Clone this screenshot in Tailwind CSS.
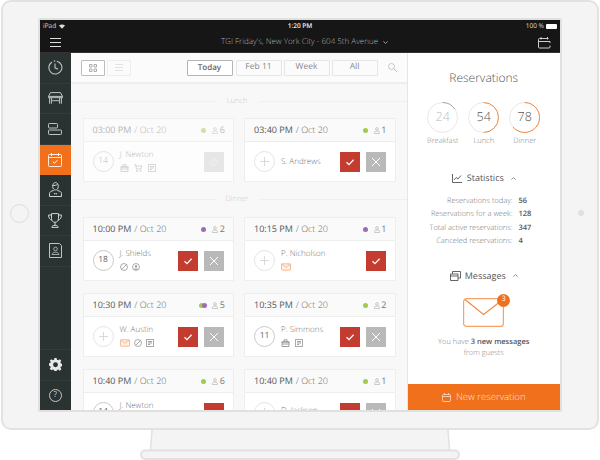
<!DOCTYPE html>
<html>
<head>
  <meta charset="UTF-8">
  <script src="https://cdn.jsdelivr.net/npm/@tailwindcss/browser@4"></script>
  <title>Reservations</title>
</head>
<body class="bg-white w-[600px] h-[460px] overflow-hidden font-['Open_Sans',sans-serif] [text-rendering:geometricPrecision]">

<!-- icons -->
<svg class="hidden">
  <symbol id="i-user" viewBox="0 0 7 8"><circle cx="3.5" cy="2.2" r="1.6" fill="none" stroke="currentColor" stroke-width=".7"/><path d="M.6 7.5V6.4c0-1 .8-1.7 1.7-1.7h2.4c.9 0 1.7.7 1.7 1.700v1.100z" fill="none" stroke="currentColor" stroke-width=".7"/></symbol>
  <symbol id="i-check" viewBox="0 0 20 20"><path d="M6.500 10.200l2.500 2.400 4.600-4.800" fill="none" stroke="#fff" stroke-width="1.300"/></symbol>
  <symbol id="i-x" viewBox="0 0 20 20"><path d="M6 6l8 8M14 6l-8 8" fill="none" stroke="#fff" stroke-width="1"/></symbol>
  <symbol id="i-plus" viewBox="0 0 21 21"><path d="M10.500 5.500v10M5.500 10.500h10" fill="none" stroke="currentColor" stroke-width=".8"/></symbol>
  <symbol id="i-gift" viewBox="0 0 9 8"><path d="M1 3h7v4.500H1zM.5 3h8M3 3V.8M6 3V.8M3 .8h3M1 5h7" fill="none" stroke="currentColor" stroke-width=".8"/></symbol>
  <symbol id="i-cart" viewBox="0 0 9 8"><path d="M.2.800h1.400l.9 4.200h4.500l1-3H1.900M3 7.600a.6.600 0 100-1.200.6.600 0 000 1.200zM6.500 7.600a.6.600 0 100-1.200.6.600 0 000 1.200z" fill="none" stroke="currentColor" stroke-width=".8"/></symbol>
  <symbol id="i-note" viewBox="0 0 8 8"><path d="M.4.400h7.200v7.200H.4zM2 2.500h4M2 4h4M2 5.500h2.200" fill="none" stroke="currentColor" stroke-width=".8"/></symbol>
  <symbol id="i-ban" viewBox="0 0 9 9"><circle cx="4.500" cy="4.500" r="3.900" fill="none" stroke="currentColor" stroke-width=".8"/><path d="M1.800 7.200l5.400-5.400" stroke="currentColor" stroke-width=".8"/></symbol>
  <symbol id="i-guest" viewBox="0 0 9 9"><circle cx="4.500" cy="4.500" r="3.900" fill="none" stroke="currentColor" stroke-width=".8"/><circle cx="4.500" cy="3.800" r="1.200" fill="currentColor"/><path d="M2.200 7.200c.3-1.200 4.300-1.200 4.600 0" fill="currentColor"/></symbol>
  <symbol id="i-mail" viewBox="0 0 11 8"><rect x=".5" y=".5" width="10" height="7" rx=".8" fill="#fdf0e6" stroke="#f7a46c" stroke-width=".8"/><path d="M.8.800l4.700 3.600L10.200.800" fill="none" stroke="#f7a46c" stroke-width=".8"/></symbol>
</svg>

<!-- tablet -->
<div class="ml-px w-[598px] h-[430px] border-2 border-[#e2e2e2] rounded-[10px] bg-[#f4f4f4] flex pt-4">
  <div class="w-[35px] h-[390px] flex items-center justify-center pr-[2px]">
    <div class="w-[19px] h-[19px] rounded-full border border-[#dedede]"></div>
  </div>

  <!-- screen -->
  <div class="w-[524px] h-[394px] border-2 border-[#e0e0e0] rounded-[2px] flex flex-col overflow-hidden bg-white">
    <div class="h-[32px] shrink-0 bg-[#161616] text-white">
      <div class="h-[12px] grid grid-cols-3 items-center px-[3px] text-[6.500px] font-semibold leading-none">
        <div class="flex items-center gap-[3px] font-normal text-[#ddd]">iPad
          <svg class="w-[6px] h-[5px]" viewBox="0 0 6 5"><path d="M3 4.800L0 1.600C1.700.1 4.300.1 6 1.600z" fill="#ddd"/></svg>
        </div>
        <div class="text-center text-[#eee]">1:20 PM</div>
        <div class="flex items-center justify-end gap-px font-normal text-[#ddd]">100 %
          <div class="w-[11px] h-[5px] bg-white rounded-[1px] ml-px"></div>
        </div>
      </div>
      <div class="h-[20px] flex items-center pl-[10px] pr-[9px]">
        <svg class="w-[11px] h-[9px] shrink-0" viewBox="0 0 11 9"><path d="M0 .5h11M0 4.500h11M0 8.500h11" stroke="#ddd" stroke-width="1"/></svg>
        <div class="flex-1 flex items-center justify-center gap-[5px] text-[8px] font-light text-[#aaa] pl-[10px]">TGI Friday's, New York City - 604 5th Avenue
          <svg class="w-[5px] h-[3px]" viewBox="0 0 5 3"><path d="M.4.400l2.100 2 2.100-2" fill="none" stroke="#bbb" stroke-width=".8"/></svg>
        </div>
        <svg class="w-[13px] h-[13px] shrink-0" viewBox="0 0 13 13"><path d="M10.500 2.500h-9a1 1 0 00-1 1v7.500a1 1 0 001 1h9.500a1 1 0 001-1v-1.500M.5 5.500h11.500v1.500M3 1v2.500M9.500 1v2.500" fill="none" stroke="#ccc" stroke-width="1"/></svg>
      </div>
    </div>

    <div class="flex-1 flex min-h-0 border-t border-[#333]">
      <!-- sidebar -->
      <div class="w-[30.500px] shrink-0 bg-[#2b3332] flex flex-col">
        <div class="h-[30.500px] border-b border-[#333c3b] flex items-center justify-center">
          <svg class="w-[15px] h-[15px]" viewBox="0 0 15 15"><path d="M8.800 1.200A6.500 6.500 0 1 1 4 2" fill="none" stroke="#bfc3c2" stroke-width="1.100"/><path d="M7 3.500v4.300l3 1.500" fill="none" stroke="#bfc3c2" stroke-width="1.100"/><circle cx="6.500" cy="1" r=".8" fill="#bfc3c2"/></svg>
        </div>
        <div class="h-[30.500px] border-b border-[#333c3b] flex items-center justify-center">
          <svg class="w-[15px] h-[12px]" viewBox="0 0 15 12"><path d="M2.500.6h10L14.500 4.400H.5zM.5 4.400v1.300h14V4.400M1.600 5.700v6M13.400 5.700v6M3.400 5.700v3h8.200v-3M3.400 8.700v3M11.600 8.700v3" fill="none" stroke="#bfc3c2" stroke-width="1"/></svg>
        </div>
        <div class="h-[30.500px] border-b border-[#333c3b] flex items-center justify-center">
          <svg class="w-[14px] h-[12px]" viewBox="0 0 14 12"><rect x=".5" y=".5" width="9" height="4.500" rx=".8" fill="none" stroke="#bfc3c2"/><rect x=".5" y="7" width="13" height="4.500" rx=".8" fill="none" stroke="#bfc3c2"/></svg>
        </div>
        <div class="h-[30.500px] bg-[#f1701c] flex items-center justify-center">
          <svg class="w-[14px] h-[14px]" viewBox="0 0 14 14"><rect x=".5" y="1.500" width="13" height="12" rx="1" fill="none" stroke="#fff" stroke-opacity=".85"/><path d="M.5 4.500h13M3.500 0v3M10.500 0v3" fill="none" stroke="#fff" stroke-opacity=".85"/><path d="M4.800 8.700l1.700 1.600 2.800-3" fill="none" stroke="#fff"/></svg>
        </div>
        <div class="h-[30.500px] border-b border-[#333c3b] flex items-center justify-center">
          <svg class="w-[13px] h-[15px]" viewBox="0 0 13 15"><path d="M3.700 4.300c0-5 5.600-5 5.600 0 0 2.200-1.200 3.700-2.800 3.700S3.700 6.500 3.700 4.300zM3.600 3.600c1.800 0 4-.4 5-1.600M4.700 8.500C2 9 .5 10 .5 11.500v3h12v-3c0-1.500-1.500-2.500-4.200-3" fill="none" stroke="#d0d3d2" stroke-width="1"/><path d="M5 11l1.500.6L8 11v1.500l-1.500-.6-1.500.6z" fill="#d0d3d2"/></svg>
        </div>
        <div class="h-[30.500px] border-b border-[#333c3b] flex items-center justify-center">
          <svg class="w-[14px] h-[15px]" viewBox="0 0 14 15"><path d="M3.500.6h7v5c0 2.200-1.500 3.700-3.500 3.700S3.500 7.800 3.500 5.600zM3.500 2H.6c0 3 1.200 4.700 3.400 5M10.500 2h2.900c0 3-1.200 4.700-3.400 5M7 9.300v2.700M3.800 14.400c0-2.800 6.400-2.800 6.400 0z" fill="none" stroke="#d0d3d2" stroke-width="1"/></svg>
        </div>
        <div class="h-[30.500px] border-b border-[#333c3b] flex items-center justify-center">
          <svg class="w-[13px] h-[15px]" viewBox="0 0 13 15"><path d="M.5.500h10l2 2v12H.5z" fill="none" stroke="#bfc3c2"/><circle cx="6.500" cy="6" r="1.800" fill="none" stroke="#bfc3c2" stroke-width=".8"/><path d="M3 11.500c0-3 7-3 7 0z" fill="none" stroke="#bfc3c2" stroke-width=".8"/></svg>
        </div>
        <div class="flex-1"></div>
        <div class="h-[30.500px] border-t border-[#333c3b] flex items-center justify-center">
          <svg class="w-[13px] h-[13px]" viewBox="0 0 24 24"><path fill-rule="evenodd" d="M10 0h4l.7 3.200 2.300 1 2.800-1.800 2.800 2.800L21 8l1 2.300 3 .7v4l-3 .7-1 2.300 1.800 2.800-2.800 2.800L17 21l-2.300 1-.7 3h-4l-.7-3-2.300-1-2.800 1.800L1.400 20 3.200 17l-1-2.300-3-.7v-4l3-.7 1-2.300L1.400 5.200l2.800-2.800L7 4.200l2.300-1zM12 8a4.500 4.500 0 100 9 4.500 4.500 0 000-9z" fill="#e8e8e8"/></svg>
        </div>
        <div class="h-[30.500px] border-t border-[#333c3b] flex items-center justify-center">
          <div class="w-[13px] h-[13px] rounded-full border border-[#c4c7c6] flex items-center justify-center text-[8px] leading-none text-[#d0d3d2]">?</div>
        </div>
      </div>

      <!-- reservations list -->
      <div class="w-[337px] shrink-0 bg-[#f8f8f8] border-r border-[#e6e6e6] flex flex-col overflow-hidden">
        <div class="h-[31px] shrink-0 bg-[#fbfbfb] border-b-2 border-[#eeeeee] flex items-center pl-[10px] pr-[10px] text-[8.500px] text-[#888]">
          <div class="w-[24px] h-[16px] border border-[#bdbdbd] rounded-[1px] flex items-center justify-center bg-white">
            <svg class="w-[8px] h-[8px]" viewBox="0 0 8 8"><path d="M.5.500h2.500v2.500H.5zM5 .500h2.500v2.500H5zM.5 5h2.500v2.500H.5zM5 5h2.500v2.500H5z" fill="none" stroke="#999" stroke-width=".8"/></svg>
          </div>
          <div class="w-[24px] h-[16px] ml-[2px] border border-[#eeeeee] rounded-[1px] flex items-center justify-center">
            <svg class="w-[8px] h-[7px]" viewBox="0 0 8 7"><path d="M0 .5h8M0 3.500h8M0 6.500h8" stroke="#ddd" stroke-width=".8"/></svg>
          </div>
          <div class="ml-auto w-[46px] h-[16px] border border-[#b5b5b5] rounded-[1px] bg-white flex items-center justify-center text-[8px] font-semibold text-[#666]">Today</div>
          <div class="ml-[3px] w-[46px] h-[16px] border border-[#e6e6e6] rounded-[1px] flex items-center justify-center">Feb 11</div>
          <div class="ml-[2px] w-[46px] h-[16px] border border-[#e6e6e6] rounded-[1px] flex items-center justify-center">Week</div>
          <div class="ml-[2px] w-[46px] h-[16px] border border-[#e6e6e6] rounded-[1px] flex items-center justify-center">All</div>
          <svg class="ml-[10px] w-[9px] h-[9px]" viewBox="0 0 9 9"><circle cx="3.500" cy="3.500" r="3" fill="none" stroke="#bbb" stroke-width=".8"/><path d="M5.700 5.700L8.800 8.800" stroke="#bbb"/></svg>
        </div>

        <div class="h-[16px] mt-[9px] mb-[9px] shrink-0 flex items-center text-[7.500px] text-[#ccc] font-light">
          <div class="flex-1 h-px bg-[#f0f0f0]"></div><div class="w-[43px] pt-px text-center">Lunch</div><div class="w-[148px] h-px bg-[#f0f0f0]"></div>
        </div>

        <div class="grid grid-cols-2 gap-x-[10px] pl-3 pr-[11px] shrink-0">
          <!-- 03:00 PM -->
          <div class="h-[64px] border border-[#f0f0f0] bg-[#fdfdfd]">
            <div class="h-[23px] bg-[#fbfbfb] border-b border-[#f0f0f0] flex items-center pl-[9px] pr-[8px] text-[9px] text-[#b5b5b5]">
              <span>03:00 PM</span><span class="font-light ml-[3px]">/ Oct 20</span>
              <div class="ml-auto w-[5px] h-[5px] rounded-full bg-[#cfe0a8]"></div>
              <svg class="ml-[6px] w-[6px] h-[7px] text-[#ccc]"><use href="#i-user"/></svg>
              <span class="ml-[1.500px] text-[#bbb]">6</span>
            </div>
            <div class="flex items-center pl-[9px] pr-[9px] h-[39px]">
              <div class="w-[21px] h-[21px] rounded-full border border-[#e4e4e4] flex items-center justify-center text-[8.500px] text-[#bbb] font-light">14</div>
              <div class="ml-[6px] -mt-px text-[8px] font-light text-[#bbb] leading-[10px]">J. Newton
                <div class="flex gap-[5px] mt-[4px] text-[#ccc]">
                  <svg class="w-[9px] h-[8px]"><use href="#i-gift"/></svg>
                  <svg class="w-[9px] h-[8px]"><use href="#i-cart"/></svg>
                  <svg class="w-[8px] h-[8px]"><use href="#i-note"/></svg>
                </div>
              </div>
              <div class="ml-auto w-[20px] h-[20px] bg-[#e6e6e6] flex items-center justify-center">
                <svg class="w-[8px] h-[8px]" viewBox="0 0 8 8"><circle cx="4" cy="4" r="3.500" fill="none" stroke="#f4f4f4" stroke-width=".7"/><path d="M4 2v2.200l1.400.7" fill="none" stroke="#f4f4f4" stroke-width=".7"/></svg>
              </div>
            </div>
          </div>
          <!-- 03:40 PM -->
          <div class="h-[64px] border border-[#eeeeee] bg-white">
            <div class="h-[23px] bg-[#fafafa] border-b border-[#eeeeee] flex items-center pl-[9px] pr-[8px] text-[9px] text-[#555]">
              <span>03:40 PM</span><span class="font-light ml-[3px] text-[#666]">/ Oct 20</span>
              <div class="ml-auto w-[5px] h-[5px] rounded-full bg-[#a4c94d]"></div>
              <svg class="ml-[6px] w-[6px] h-[7px] text-[#aaa]"><use href="#i-user"/></svg>
              <span class="ml-[1.500px] text-[#777]">1</span>
            </div>
            <div class="flex items-center pl-[9px] pr-[9px] h-[39px]">
              <div class="w-[21px] h-[21px] rounded-full border border-[#e4e4e4] text-[#ccc]"><svg class="w-full h-full"><use href="#i-plus"/></svg></div>
              <div class="ml-[6px] text-[8px] font-light text-[#777]">S. Andrews</div>
              <div class="ml-auto w-[20px] h-[20px] bg-[#c43b2f]"><svg class="w-full h-full"><use href="#i-check"/></svg></div>
              <div class="ml-[6px] w-[20px] h-[20px] bg-[#b9b9b9]"><svg class="w-full h-full"><use href="#i-x"/></svg></div>
            </div>
          </div>
        </div>

        <div class="h-[16px] mt-[9px] mb-[10px] shrink-0 flex items-center text-[7.500px] text-[#ccc] font-light">
          <div class="flex-1 h-px bg-[#f0f0f0]"></div><div class="w-[43px] pt-[2px] text-center">Dinner</div><div class="w-[148px] h-px bg-[#f0f0f0]"></div>
        </div>

        <div class="grid grid-cols-2 gap-x-[10px] gap-y-3 pl-3 pr-[11px] shrink-0">
          <!-- 10:00 PM -->
          <div class="h-[64px] border border-[#eeeeee] bg-white">
            <div class="h-[23px] bg-[#fafafa] border-b border-[#eeeeee] flex items-center pl-[9px] pr-[8px] text-[9px] text-[#555]">
              <span>10:00 PM</span><span class="font-light ml-[3px] text-[#666]">/ Oct 20</span>
              <div class="ml-auto w-[5px] h-[5px] rounded-full bg-[#9c6db3]"></div>
              <svg class="ml-[6px] w-[6px] h-[7px] text-[#aaa]"><use href="#i-user"/></svg>
              <span class="ml-[1.500px] text-[#777]">2</span>
            </div>
            <div class="flex items-center pl-[9px] pr-[9px] h-[39px]">
              <div class="w-[21px] h-[21px] rounded-full border border-[#c9c9c9] flex items-center justify-center text-[8.500px] text-[#666]">18</div>
              <div class="ml-[6px] -mt-px text-[8px] font-light text-[#777] leading-[10px]">J. Shields
                <div class="flex gap-[4px] mt-[4px] text-[#888]">
                  <svg class="w-[8px] h-[8px]"><use href="#i-ban"/></svg>
                  <svg class="w-[8px] h-[8px]"><use href="#i-guest"/></svg>
                </div>
              </div>
              <div class="ml-auto w-[20px] h-[20px] bg-[#c43b2f]"><svg class="w-full h-full"><use href="#i-check"/></svg></div>
              <div class="ml-[6px] w-[20px] h-[20px] bg-[#b9b9b9]"><svg class="w-full h-full"><use href="#i-x"/></svg></div>
            </div>
          </div>
          <!-- 10:15 PM -->
          <div class="h-[64px] border border-[#eeeeee] bg-white">
            <div class="h-[23px] bg-[#fafafa] border-b border-[#eeeeee] flex items-center pl-[9px] pr-[8px] text-[9px] text-[#555]">
              <span>10:15 PM</span><span class="font-light ml-[3px] text-[#666]">/ Oct 20</span>
              <div class="ml-auto w-[5px] h-[5px] rounded-full bg-[#9c6db3]"></div>
              <svg class="ml-[6px] w-[6px] h-[7px] text-[#aaa]"><use href="#i-user"/></svg>
              <span class="ml-[1.500px] text-[#777]">1</span>
            </div>
            <div class="flex items-center pl-[9px] pr-[9px] h-[39px]">
              <div class="w-[21px] h-[21px] rounded-full border border-[#e4e4e4] text-[#ccc]"><svg class="w-full h-full"><use href="#i-plus"/></svg></div>
              <div class="ml-[6px] -mt-px text-[8px] font-light text-[#777] leading-[10px]">P. Nicholson
                <div class="flex mt-[4px]"><svg class="w-[10px] h-[8px]"><use href="#i-mail"/></svg></div>
              </div>
              <div class="ml-auto w-[20px] h-[20px] bg-[#c43b2f]"><svg class="w-full h-full"><use href="#i-check"/></svg></div>
            </div>
          </div>
          <!-- 10:30 PM -->
          <div class="h-[64px] border border-[#eeeeee] bg-white">
            <div class="h-[23px] bg-[#fafafa] border-b border-[#eeeeee] flex items-center pl-[9px] pr-[8px] text-[9px] text-[#555]">
              <span>10:30 PM</span><span class="font-light ml-[3px] text-[#666]">/ Oct 20</span>
              <div class="ml-auto flex">
                <div class="w-[5px] h-[5px] rounded-full bg-[#a4c94d]"></div>
                <div class="w-[5px] h-[5px] rounded-full bg-[#9c6db3] -ml-[2px]"></div>
              </div>
              <svg class="ml-[5px] w-[6px] h-[7px] text-[#aaa]"><use href="#i-user"/></svg>
              <span class="ml-[1.500px] text-[#777]">5</span>
            </div>
            <div class="flex items-center pl-[9px] pr-[9px] h-[39px]">
              <div class="w-[21px] h-[21px] rounded-full border border-[#e4e4e4] text-[#ccc]"><svg class="w-full h-full"><use href="#i-plus"/></svg></div>
              <div class="ml-[6px] -mt-px text-[8px] font-light text-[#777] leading-[10px]">W. Austin
                <div class="flex items-center gap-[4px] mt-[4px] text-[#888]">
                  <svg class="w-[10px] h-[8px]"><use href="#i-mail"/></svg>
                  <svg class="w-[8px] h-[8px]"><use href="#i-ban"/></svg>
                  <svg class="w-[8px] h-[8px]"><use href="#i-note"/></svg>
                </div>
              </div>
              <div class="ml-auto w-[20px] h-[20px] bg-[#c43b2f]"><svg class="w-full h-full"><use href="#i-check"/></svg></div>
              <div class="ml-[6px] w-[20px] h-[20px] bg-[#b9b9b9]"><svg class="w-full h-full"><use href="#i-x"/></svg></div>
            </div>
          </div>
          <!-- 10:35 PM -->
          <div class="h-[64px] border border-[#eeeeee] bg-white">
            <div class="h-[23px] bg-[#fafafa] border-b border-[#eeeeee] flex items-center pl-[9px] pr-[8px] text-[9px] text-[#555]">
              <span>10:35 PM</span><span class="font-light ml-[3px] text-[#666]">/ Oct 20</span>
              <div class="ml-auto w-[5px] h-[5px] rounded-full bg-[#a4c94d]"></div>
              <svg class="ml-[6px] w-[6px] h-[7px] text-[#aaa]"><use href="#i-user"/></svg>
              <span class="ml-[1.500px] text-[#777]">2</span>
            </div>
            <div class="flex items-center pl-[9px] pr-[9px] h-[39px]">
              <div class="w-[21px] h-[21px] rounded-full border border-[#c9c9c9] flex items-center justify-center text-[8.500px] text-[#666]">11</div>
              <div class="ml-[6px] -mt-px text-[8px] font-light text-[#777] leading-[10px]">P. Simmons
                <div class="flex gap-[5px] mt-[4px] text-[#888]">
                  <svg class="w-[9px] h-[8px]"><use href="#i-gift"/></svg>
                  <svg class="w-[8px] h-[8px]"><use href="#i-note"/></svg>
                </div>
              </div>
              <div class="ml-auto w-[20px] h-[20px] bg-[#c43b2f]"><svg class="w-full h-full"><use href="#i-check"/></svg></div>
              <div class="ml-[6px] w-[20px] h-[20px] bg-[#b9b9b9]"><svg class="w-full h-full"><use href="#i-x"/></svg></div>
            </div>
          </div>
          <!-- 10:40 PM -->
          <div class="h-[64px] border border-[#eeeeee] bg-white">
            <div class="h-[23px] bg-[#fafafa] border-b border-[#eeeeee] flex items-center pl-[9px] pr-[8px] text-[9px] text-[#555]">
              <span>10:40 PM</span><span class="font-light ml-[3px] text-[#666]">/ Oct 20</span>
              <div class="ml-auto w-[5px] h-[5px] rounded-full bg-[#a4c94d]"></div>
              <svg class="ml-[6px] w-[6px] h-[7px] text-[#aaa]"><use href="#i-user"/></svg>
              <span class="ml-[1.500px] text-[#777]">6</span>
            </div>
            <div class="flex items-center pl-[9px] pr-[9px] h-[39px]">
              <div class="w-[21px] h-[21px] rounded-full border border-[#c9c9c9] flex items-center justify-center text-[8.500px] text-[#666]">14</div>
              <div class="ml-[6px] -mt-px text-[8px] font-light text-[#777] leading-[10px]">J. Newton
                <div class="flex gap-[5px] mt-[4px] text-[#888]">
                  <svg class="w-[9px] h-[8px]"><use href="#i-gift"/></svg>
                </div>
              </div>
              <div class="ml-auto w-[20px] h-[20px] bg-[#c43b2f]"><svg class="w-full h-full"><use href="#i-check"/></svg></div>
            </div>
          </div>
          <!-- 10:40 PM -->
          <div class="h-[64px] border border-[#eeeeee] bg-white">
            <div class="h-[23px] bg-[#fafafa] border-b border-[#eeeeee] flex items-center pl-[9px] pr-[8px] text-[9px] text-[#555]">
              <span>10:40 PM</span><span class="font-light ml-[3px] text-[#666]">/ Oct 20</span>
              <div class="ml-auto w-[5px] h-[5px] rounded-full bg-[#a4c94d]"></div>
              <svg class="ml-[6px] w-[6px] h-[7px] text-[#aaa]"><use href="#i-user"/></svg>
              <span class="ml-[1.500px] text-[#777]">1</span>
            </div>
            <div class="flex items-center pl-[9px] pr-[9px] h-[39px]">
              <div class="w-[21px] h-[21px] rounded-full border border-[#e4e4e4] text-[#ccc]"><svg class="w-full h-full"><use href="#i-plus"/></svg></div>
              <div class="ml-[6px] -mt-[3px] text-[8px] font-light text-[#777]">D. Jackson</div>
              <div class="ml-auto w-[20px] h-[20px] bg-[#c43b2f]"><svg class="w-full h-full"><use href="#i-check"/></svg></div>
              <div class="ml-[6px] w-[20px] h-[20px] bg-[#b9b9b9]"><svg class="w-full h-full"><use href="#i-x"/></svg></div>
            </div>
          </div>
        </div>
      </div>

      <!-- summary panel -->
      <div class="flex-1 min-w-0 flex flex-col bg-white">
        <div class="flex-1 flex flex-col items-center">
          <div class="mt-[16px] text-[12px] leading-[18px] font-light text-[#555]">Reservations</div>

          <div class="mt-[15px] flex gap-[10px] text-[#777]">
            <div class="w-[31px] flex flex-col items-center">
              <div class="relative w-[31px] h-[31px] flex items-center justify-center text-[12.500px] font-light text-[#bbb]">24
                <svg class="absolute inset-0" viewBox="0 0 31 31"><circle cx="15.500" cy="15.500" r="15" fill="none" stroke="#e8e8e8"/><path d="M15.500.5A15 15 0 0 1 28 7.300" fill="none" stroke="#aaa"/></svg>
              </div>
              <div class="mt-[2px] text-[7.500px] leading-[12px] font-light text-[#888]">Breakfast</div>
            </div>
            <div class="w-[31px] flex flex-col items-center">
              <div class="relative w-[31px] h-[31px] flex items-center justify-center text-[12.500px] font-light text-[#555]">54
                <svg class="absolute inset-0" viewBox="0 0 31 31"><circle cx="15.500" cy="15.500" r="15" fill="none" stroke="#e8e8e8"/><path d="M15.500.5A15 15 0 0 1 15.500 30.500" fill="none" stroke="#f58a45"/></svg>
              </div>
              <div class="mt-[2px] text-[7.500px] leading-[12px] font-light text-[#888]">Lunch</div>
            </div>
            <div class="w-[31px] flex flex-col items-center">
              <div class="relative w-[31px] h-[31px] flex items-center justify-center text-[12.500px] font-light text-[#555]">78
                <svg class="absolute inset-0" viewBox="0 0 31 31"><circle cx="15.500" cy="15.500" r="15" fill="none" stroke="#e8e8e8"/><path d="M15.500.5A15 15 0 1 1 4 25" fill="none" stroke="#f58a45"/></svg>
              </div>
              <div class="mt-[2px] text-[7.500px] leading-[12px] font-light text-[#888]">Dinner</div>
            </div>
          </div>

          <div class="mt-[24px] flex items-center text-[9px] leading-[14px] text-[#555]">
            <svg class="w-[10px] h-[9px] mr-[5px]" viewBox="0 0 10 9"><path d="M.5 0v8.500H10M2 6l2.200-2.500L6 5l3-3.500" fill="none" stroke="#555" stroke-width=".9"/></svg>Statistics
            <svg class="ml-[7px] w-[5px] h-[3px]" viewBox="0 0 5 3"><path d="M.4 2.600l2.100-2 2.100 2" fill="none" stroke="#777" stroke-width=".8"/></svg>
          </div>

          <div class="mt-[9.500px] w-full grid grid-cols-[105px_1fr] gap-x-[6px] text-[7.500px] leading-[13.500px]">
            <div class="text-right font-light text-[#777]">Reservations today:</div><div class="font-semibold text-[#555]">56</div>
            <div class="text-right font-light text-[#777]">Reservations for a week:</div><div class="font-semibold text-[#555]">128</div>
            <div class="text-right font-light text-[#777]">Total active reservations:</div><div class="font-semibold text-[#555]">347</div>
            <div class="text-right font-light text-[#777]">Canceled reservations:</div><div class="font-semibold text-[#555]">4</div>
          </div>

          <div class="mt-[20px] flex items-center text-[9px] leading-[14px] text-[#555]">
            <svg class="w-[11px] h-[10px] mr-[4px]" viewBox="0 0 11 10"><path d="M.5 3h7.500v6.500H.5zM2.500 3V.5h8V7H8M.5 5h7.500" fill="none" stroke="#555" stroke-width=".9"/></svg>Messages
            <svg class="ml-[7px] w-[5px] h-[3px]" viewBox="0 0 5 3"><path d="M.4 2.600l2.100-2 2.100 2" fill="none" stroke="#777" stroke-width=".8"/></svg>
          </div>

          <div class="relative mt-[15px] w-[41px] h-[29px]">
            <svg class="w-full h-full" viewBox="0 0 41 29"><rect x=".6" y=".6" width="39.800" height="27.800" rx="3" fill="none" stroke="#f8a26a" stroke-width="1.200"/><path d="M2 1.500l18.500 15L38 3" fill="none" stroke="#f58a45" stroke-width="1.200"/></svg>
            <div class="absolute -top-[4px] -right-[6px] w-[13px] h-[13px] rounded-full bg-[#f1701c] flex items-center justify-center text-[7.500px] leading-none text-white">3</div>
          </div>

          <div class="mt-[10.500px] text-center text-[7.500px] leading-[11px] font-light text-[#888]">
            You have <span class="font-semibold text-[#555]">3 new messages</span><br>from guests
          </div>
        </div>
        <div class="h-[26px] shrink-0 bg-[#f1701c] flex items-center justify-center gap-[5px] text-[9.500px] font-light text-[#ffe0cc]">
          <svg class="w-[9px] h-[9px]" viewBox="0 0 9 9"><rect x=".5" y="1.500" width="8" height="7" rx="1" fill="none" stroke="#ffe0cc" stroke-width=".8"/><path d="M.5 3.500h8M2.500 0v2M6.500 0v2" stroke="#ffe0cc" stroke-width=".8"/></svg>
          New reservation
        </div>
      </div>
    </div>
  </div>

  <div class="flex-1 h-[390px] flex items-center justify-center pl-[2px]">
    <div class="w-[6px] h-[6px] rounded-full bg-[#e0e0e0]"></div>
  </div>
</div>

<!-- stand -->
<svg class="block w-[600px] h-[30px]" viewBox="0 0 600 30">
  <path d="M152 0L150.500 20.500H449.500L448 0" fill="#f4f4f4" stroke="#e2e2e2" stroke-width="1.500"/>
  <rect x="141" y="20.500" width="318" height="8.500" rx="4" fill="#f4f4f4" stroke="#e2e2e2" stroke-width="2"/>
</svg>
</body>
</html>
